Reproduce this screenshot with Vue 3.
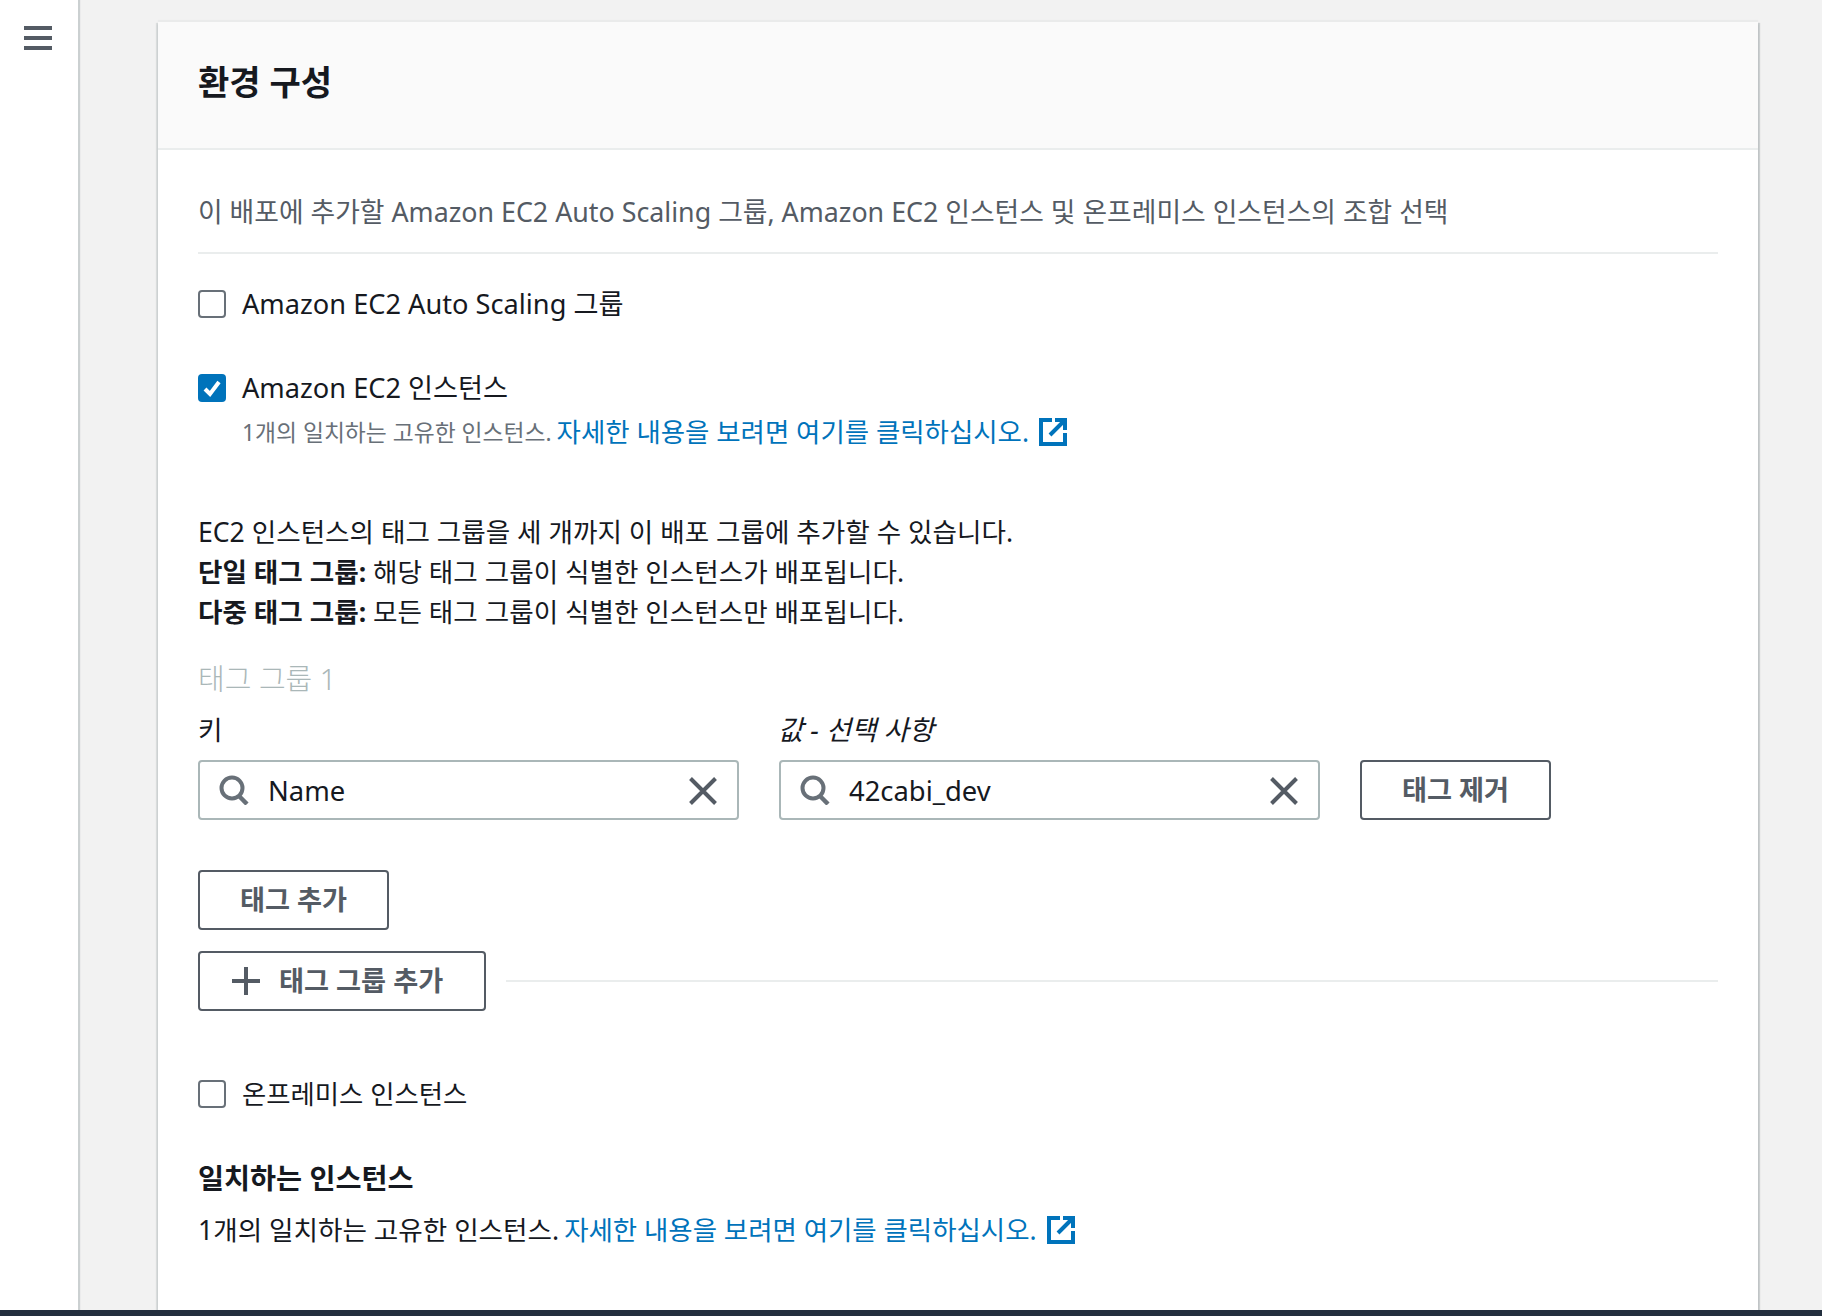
<script setup>
const tagFields = [
  { id: 'key', label: '키', value: 'Name', italic: false },
  { id: 'val', label: '값 - 선택 사항', value: '42cabi_dev', italic: true },
]
</script>

<template>
  <div class="page">
    <div class="shell">
      <aside class="side">
        <div class="burger"><span></span><span></span><span></span></div>
      </aside>
      <main class="main">
        <section class="card">
          <header class="card-head"><h2>환경 구성</h2></header>
          <div class="card-body">
            <p class="desc">이 배포에 추가할 Amazon EC2 Auto Scaling 그룹, Amazon EC2 인스턴스 및 온프레미스 인스턴스의 조합 선택</p>

            <div class="check-row first">
              <span class="box"></span>
              <span>Amazon EC2 Auto Scaling 그룹</span>
            </div>
            <div class="check-row second">
              <span class="box on">
                <svg viewBox="0 0 28 28" width="28" height="28"><path d="M7 15l5 5 9-12" fill="none" stroke="#fff" stroke-width="4"/></svg>
              </span>
              <span>Amazon EC2 인스턴스</span>
            </div>
            <div class="sub">
              <span class="sub-gray">1개의 일치하는 고유한 인스턴스.</span>
              <a class="link">자세한 내용을 보려면 여기를 클릭하십시오.</a>
              <svg class="ext" viewBox="0 0 28 28" width="28" height="28"><path d="M13 2H2V26H26V15M11 17L24 4M16 2H26V12" fill="none" stroke="#0073bb" stroke-width="4"/></svg>
            </div>

            <div class="para">
              <p>EC2 인스턴스의 태그 그룹을 세 개까지 이 배포 그룹에 추가할 수 있습니다.</p>
              <p><b>단일 태그 그룹:</b> 해당 태그 그룹이 식별한 인스턴스가 배포됩니다.</p>
              <p><b>다중 태그 그룹:</b> 모든 태그 그룹이 식별한 인스턴스만 배포됩니다.</p>
            </div>

            <div class="group-title">태그 그룹 1</div>
            <div class="tag-row">
              <div v-for="f in tagFields" :key="f.id" class="field">
                <div class="field-label" :class="{ ital: f.italic }">{{ f.label }}</div>
                <div class="input">
                  <svg class="search" viewBox="0 0 30 30" width="30" height="30"><circle cx="13" cy="13" r="10.5" fill="none" stroke="#687078" stroke-width="4"/><path d="M20 21l8 8" stroke="#687078" stroke-width="4.5" fill="none"/></svg>
                  <span class="value">{{ f.value }}</span>
                  <svg class="clear" viewBox="0 0 28 28" width="28" height="28"><path d="M1.5 1.5l25 25M26.5 1.5l-25 25" stroke="#545b64" stroke-width="4" fill="none"/></svg>
                </div>
              </div>
              <button class="btn remove">태그 제거</button>
            </div>

            <button class="btn add-tag">태그 추가</button>
            <div class="group-add">
              <button class="btn add-group">
                <svg viewBox="0 0 30 30" width="30" height="30"><path d="M15 1v28M1 15h28" stroke="#545b64" stroke-width="4" fill="none"/></svg>
                <span>태그 그룹 추가</span>
              </button>
              <div class="rule"></div>
            </div>

            <div class="check-row third">
              <span class="box"></span>
              <span class="thin">온프레미스 인스턴스</span>
            </div>

            <h3 class="match-title">일치하는 인스턴스</h3>
            <div class="match">
              <span>1개의 일치하는 고유한 인스턴스.</span>
              <a class="link">자세한 내용을 보려면 여기를 클릭하십시오.</a>
              <svg class="ext" viewBox="0 0 28 28" width="28" height="28"><path d="M13 2H2V26H26V15M11 17L24 4M16 2H26V12" fill="none" stroke="#0073bb" stroke-width="4"/></svg>
            </div>
          </div>
        </section>
      </main>
    </div>
    <div class="footer"></div>
  </div>
</template>

<style>
html, body { margin: 0; background: #f2f2f2; }
</style>

<style scoped>
.page {
  width: 1822px;
  height: 1316px;
  display: flex;
  flex-direction: column;
  overflow: hidden;
  background: #f2f2f2;
  color: #16191f;
  font-family: "Noto Sans", "Noto Sans CJK KR", sans-serif;
  font-size: 26.6px;
  line-height: 40px;
}
.shell { flex: 1; display: flex; min-height: 0; }
.side {
  width: 78px;
  flex: none;
  background: #fff;
  box-shadow: 2px 0 1px rgba(0, 28, 36, 0.16);
  z-index: 1;
}
.burger {
  display: flex;
  flex-direction: column;
  gap: 6px;
  width: 28px;
  margin: 26px 0 0 24px;
}
.burger span { height: 4px; background: #545b64; }
.main { flex: 1; min-width: 0; padding: 22px 0 0 80px; display: flex; }
.card {
  width: 1600px;
  background: #fff;
  box-shadow: 0 2px 2px rgba(0, 28, 36, 0.2), 2px 1px 1px rgba(0, 28, 36, 0.15), -2px 1px 1px rgba(0, 28, 36, 0.09), 0 -2px 1px rgba(0, 28, 36, 0.03);
}
.card-head {
  height: 126px;
  box-sizing: content-box;
  background: #fafafa;
  border-bottom: 2px solid #eaeded;
  padding: 0 40px;
  display: flex;
  align-items: center;
}
.card-head h2 { margin: -7px 0 0; font-size: 34px; line-height: 44px; font-weight: 700; }
.card-body { padding: 42px 40px 0; }
.desc {
  margin: 0;
  padding-bottom: 20px;
  border-bottom: 2px solid #eaeded;
  color: #545b64;
  font-size: 26.8px;
}
.check-row { display: flex; align-items: center; gap: 16px; font-size: 27.2px; }
.check-row.first { margin-top: 30px; }
.check-row.second { margin-top: 44px; }
.check-row.third { margin-top: 63px; }
.thin { font-size: 26.4px; }
.box {
  width: 28px;
  height: 28px;
  box-sizing: border-box;
  border: 2px solid #687078;
  border-radius: 4px;
  flex: none;
  background: #fff;
}
.box.on { background: #0073bb; border: 0; }
.box svg { display: block; }
.sub { display: flex; align-items: center; margin: 2px 0 0 44px; gap: 5px; }
.sub-gray { color: #687078; font-size: 22.8px; margin-top: 3px; }
.link { color: #0073bb; font-size: 26.45px; }
.ext { margin-left: 5px; flex: none; }
.para { margin-top: 59px; }
.para p { margin: 0; }
.group-title { margin-top: 27px; color: #aab7b8; font-size: 29px; font-weight: 300; }
.tag-row { display: flex; align-items: flex-end; gap: 40px; margin-top: 11px; }
.field { width: 541px; flex: none; }
.field-label { margin-bottom: 10px; }
.ital { font-style: italic; font-size: 27.4px; margin-left: -1px; }
.input {
  height: 60px;
  box-sizing: border-box;
  border: 2px solid #aab7b8;
  border-radius: 4px;
  display: flex;
  align-items: center;
  padding: 0 20px 0 19px;
  background: #fff;
}
.search { flex: none; }
.value { flex: 1; margin-left: 19px; margin-top: 2px; font-size: 27.4px; }
.clear { flex: none; margin-top: 1px; }
.btn {
  height: 60px;
  box-sizing: border-box;
  border: 2px solid #545b64;
  border-radius: 4px;
  background: #fff;
  color: #545b64;
  font: inherit;
  font-size: 27.2px;
  font-weight: 700;
  padding: 0;
}
.remove { width: 191px; }
.add-tag { width: 191px; display: block; margin-top: 50px; }
.group-add { display: flex; align-items: center; gap: 20px; margin-top: 21px; }
.add-group {
  width: 288px;
  flex: none;
  display: flex;
  align-items: center;
  gap: 18px;
  padding-left: 31px;
}
.rule { flex: 1; height: 2px; background: #eaeded; }
.match-title { margin: 44px 0 0; font-size: 28.3px; line-height: 40px; font-weight: 700; }
.match { display: flex; align-items: center; gap: 5px; margin-top: 12px; }
.footer { height: 6px; background: #232f3e; flex: none; z-index: 2; }
</style>
